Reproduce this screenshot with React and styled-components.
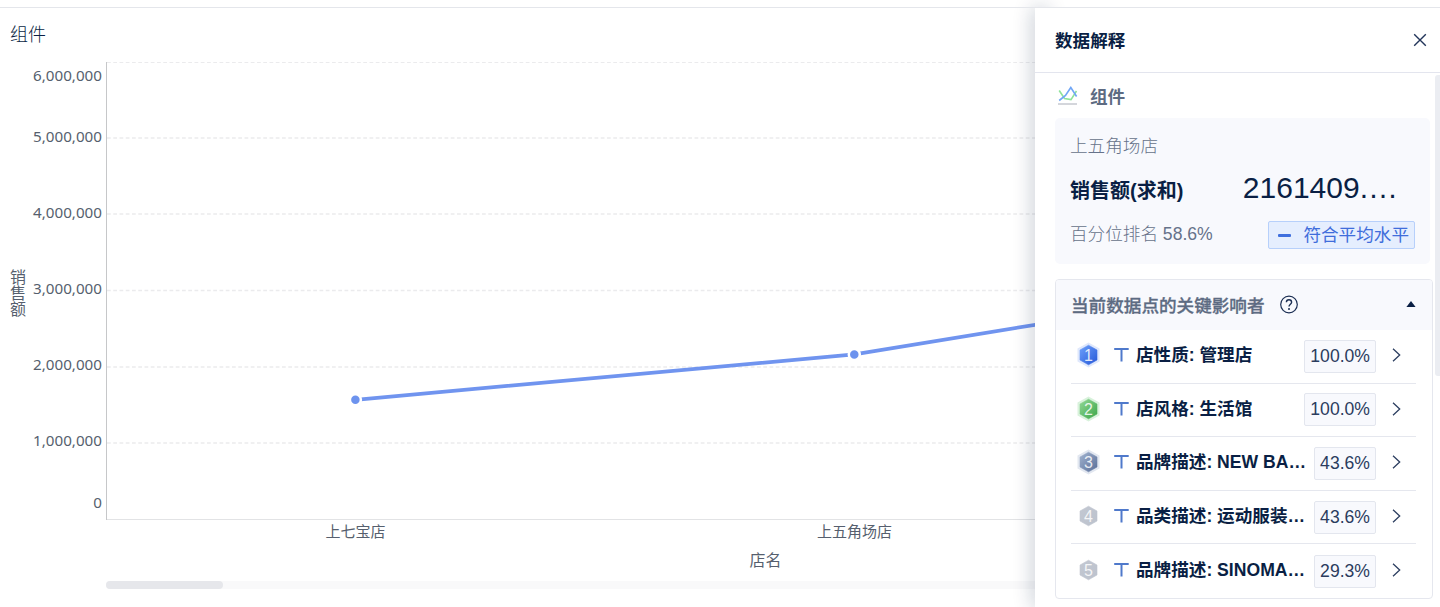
import React from "react";
import styled, { createGlobalStyle } from "styled-components";

const GlobalStyle = createGlobalStyle`
  * { box-sizing: border-box; }
  body {
    margin: 0;
    background: #fff;
    color: #0a1f44;
    font-family: "Liberation Sans", "Noto Sans CJK SC", sans-serif;
    font-size: 17.6px;
    overflow: hidden;
  }
`;

const Page = styled.div`
  display: flex;
  flex-direction: column;
  height: 607px;
  overflow: hidden;
`;

const TopLine = styled.div`
  flex: none;
  height: 8px;
  border-bottom: 1px solid #e4e6eb;
`;

const Main = styled.main`
  flex: 1;
  display: flex;
  min-height: 0;
`;

const ChartArea = styled.section`
  position: relative;
  z-index: -2;
  width: 1035px;
  flex: none;
  display: flex;
  flex-direction: column;
  overflow: hidden;
`;

const ChartTitle = styled.h2`
  margin: 0;
  padding: 14px 0 0 10px;
  height: 48px;
  font-size: 18px;
  line-height: 26px;
  font-weight: 300;
`;

const ChartSvg = styled.svg`
  display: block;
  flex: none;
`;

const AxisText = styled.text`
  fill: #565f6e;
  font-family: "Noto Sans", "Noto Sans CJK SC", sans-serif;
  font-size: ${(p) => p.$size || 15}px;
`;

const VerticalAxisText = styled(AxisText)`
  writing-mode: vertical-rl;
`;

const ScrollTrack = styled.div`
  margin: 5px 0 0 106px;
  height: 8px;
  background: #f9f9fa;
  border-radius: 4px 0 0 4px;
`;

const ScrollThumb = styled.div`
  width: 117px;
  height: 8px;
  border-radius: 4px;
  background: #e6e7eb;
`;

const Panel = styled.aside`
  position: relative;
  flex: 1;
  display: flex;
  flex-direction: column;
  background: #fff;

  &::before {
    content: "";
    position: absolute;
    z-index: -1;
    inset: 0 auto 0 0;
    width: 10px;
    box-shadow: 0 0 20px 1px rgba(9, 30, 66, 0.29);
  }
`;

const PanelHeader = styled.header`
  flex: none;
  height: 65px;
  padding: 0 13px 0 20px;
  display: flex;
  align-items: center;
  justify-content: space-between;
  border-bottom: 1px solid #e3e5ee;
`;

const PanelTitle = styled.h1`
  margin: 0;
  padding-top: 2px;
  font-size: 17.6px;
  line-height: 26px;
  font-weight: 700;
`;

const PanelBody = styled.div`
  flex: 1;
  display: flex;
  justify-content: space-between;
  min-height: 0;
`;

const PanelContent = styled.div`
  width: 398px;
  padding-left: 20px;
`;

const PanelScrollbar = styled.div`
  width: 5px;
  height: 301px;
  margin-top: 2px;
  border-radius: 3px 0 0 3px;
  background: #ebedf2;
`;

const Source = styled.div`
  display: flex;
  align-items: center;
  height: 45px;
  padding: 0 0 0 3px;
  gap: 12px;
  font-weight: 700;
  color: #5d6b82;
`;

const Summary = styled.div`
  width: 375px;
  height: 146px;
  padding: 13px 15px 0;
  background: #f8f9fd;
  border-radius: 5px;
`;

const SummaryRow = styled.div`
  display: flex;
  align-items: center;
  justify-content: space-between;
  height: ${(p) => p.$height}px;
`;

const Muted = styled.span`
  color: #66728a;
  font-weight: 300;
  padding-bottom: ${(p) => p.$lift || 0}px;
`;

const Metric = styled.strong`
  padding-top: 4px;
  font-size: 20px;
  line-height: 30px;
`;

const MetricValue = styled.span`
  font-size: 30px;
  line-height: 34px;
  padding: 0 17px 2px 0;
`;

const LevelTag = styled.span`
  display: flex;
  align-items: center;
  gap: 12px;
  height: 28px;
  width: 147px;
  padding: 0 5px 0 9px;
  border: 1px solid #b7d0fb;
  border-radius: 2px;
  background: #e5eefe;
  color: #3f6ddb;
  line-height: 26px;
  white-space: nowrap;
`;

const LevelDash = styled.i`
  width: 14px;
  height: 3px;
  border-radius: 1px;
  background: #3f6fde;
`;

const Card = styled.section`
  width: 378px;
  height: 320px;
  margin-top: 15px;
  border: 1px solid #e5e7ee;
  border-radius: 4px;
  overflow: hidden;
`;

const CardHeader = styled.div`
  display: flex;
  align-items: center;
  height: 50px;
  padding: 0 16px 2px 15px;
  background: #f8f9fd;
  color: #5d6b82;
  font-weight: 500;
  -webkit-text-stroke: 0.3px #5d6b82;
`;

const HelpSlot = styled.span`
  display: flex;
  margin-left: 15px;
  flex: 1;
`;

const RowList = styled.div`
  padding: 0 16px 0 15px;
`;

const Row = styled.div`
  display: flex;
  align-items: center;
  height: 53.6px;
  padding: 0 15px 2px 6px;
  border-bottom: 1px solid #e5e7ee;
  &:last-child { border-bottom: 0; }
`;

const RowName = styled.span`
  flex: 1;
  margin-left: 7px;
  font-weight: 700;
  line-height: 26px;
  white-space: nowrap;
`;

const Percent = styled.span`
  height: 33px;
  padding: 0 5px;
  margin: 2px 16px 0 0;
  border: 1px solid #e3e6ee;
  border-radius: 2px;
  background: #f8f9fd;
  color: #2b3c5e;
  line-height: 31px;
`;

const TypeSvg = styled.svg`
  margin-left: 14px;
`;

const RANK_STYLES = [
  { from: "#6ea1fb", to: "#2457d8", halo: "#dfe8fc" },
  { from: "#92d896", to: "#3ba648", halo: "#d9f2dc" },
  { from: "#a2b3cf", to: "#586e98", halo: "#e2e7f0" },
  { from: "#c3c8d2", to: "#bcc2cd" },
  { from: "#c3c8d2", to: "#bcc2cd" },
];

const ROWS = [
  { name: "店性质: 管理店", percent: "100.0%" },
  { name: "店风格: 生活馆", percent: "100.0%" },
  { name: "品牌描述: NEW BA…", percent: "43.6%" },
  { name: "品类描述: 运动服装…", percent: "43.6%" },
  { name: "品牌描述: SINOMA…", percent: "29.3%" },
];

const Y_LABELS = [
  ["6,000,000", 25],
  ["5,000,000", 86],
  ["4,000,000", 162],
  ["3,000,000", 238],
  ["2,000,000", 314.4],
  ["1,000,000", 390.4],
  ["0", 452.4],
];

const GRID_LINES = [6.5, 82, 158, 234.5, 311, 387];

function Chart() {
  return (
    <ChartSvg width="1035" height="520" viewBox="0 0 1035 520">
      {GRID_LINES.map((y, i) => (
        <line key={y} x1="107" x2="1035" y1={y} y2={y} stroke="#ebebed" strokeWidth={i ? 1.5 : 1} strokeDasharray="3.75 2.5" />
      ))}
      <line x1="106" x2="1035" y1="463.5" y2="463.5" stroke="#e2e3e5" />
      <line x1="106.5" x2="106.5" y1="6" y2="464" stroke="#c6c7c9" />
      {Y_LABELS.map(([label, y]) => (
        <AxisText key={label} $size={15.2} x="102" y={y} textAnchor="end">{label}</AxisText>
      ))}
      <VerticalAxisText $size={16} x="17" y="213">销售额</VerticalAxisText>
      <AxisText x="355.5" y="481" textAnchor="middle">上七宝店</AxisText>
      <AxisText x="854.5" y="481" textAnchor="middle">上五角场店</AxisText>
      <AxisText $size={16} x="765.5" y="510.4" textAnchor="middle">店名</AxisText>
      <polyline points="355.4,343.8 854.3,298.4 1040,268" fill="none" stroke="#7094ef" strokeWidth="3.75" />
      {[[355.4, 343.8], [854.3, 298.6]].map(([x, y]) => (
        <circle key={x} cx={x} cy={y} r="5.5" fill="#6d93ee" stroke="#fff" strokeWidth="2.5" />
      ))}
    </ChartSvg>
  );
}

function RankBadge({ rank }) {
  const s = RANK_STYLES[rank - 1];
  const id = `rank${rank}`;
  return (
    <svg width="23" height="26" viewBox="0 0 23 26">
      <defs>
        <linearGradient id={id} x1="0" y1="0" x2="1" y2="1">
          <stop offset="0" stopColor={s.from} />
          <stop offset="1" stopColor={s.to} />
        </linearGradient>
      </defs>
      {s.halo && <path d="M11.5 .5 22.5 6.5v13l-11 6-11-6v-13z" fill={s.halo} />}
      <path d="M11.5 3.2 20 8v10l-8.500 4.800L3 18V8z" fill={`url(#${id})`} stroke={`url(#${id})`} strokeWidth=".6" strokeLinejoin="round" />
      <text x="11.500" y="18.700" textAnchor="middle" fontSize="16" fill="#fff" fillOpacity=".85">{rank}</text>
    </svg>
  );
}

function TypeIcon() {
  return (
    <TypeSvg width="15" height="16" viewBox="0 0 15 16">
      <path d="M.2 2h14.500M7.500 2v12.600" stroke="#4f79cb" strokeWidth="2" fill="none" />
    </TypeSvg>
  );
}

function Chevron() {
  return (
    <svg width="9" height="14" viewBox="0 0 9 14">
      <path d="M1 .7 7.700 7 1 13.300" fill="none" stroke="#2d3f61" strokeWidth="1.3" />
    </svg>
  );
}

function LineChartIcon() {
  return (
    <svg width="20" height="20" viewBox="0 0 20 20" fill="none">
      <path d="M1.200 4.500 6.500 12.500 13 13.600 18.500 5" stroke="#8fe39a" strokeWidth="1.600" />
      <path d="M1.200 14.500 7.500 9.500 12.800 1.500 18.600 10.500" stroke="#70a6f6" strokeWidth="1.600" />
      <path d="M0 18h19" stroke="#a9adb8" />
    </svg>
  );
}

function CloseIcon() {
  return (
    <svg width="14" height="14" viewBox="0 0 14 14">
      <path d="M1.200 1.200 12.800 12.800M12.800 1.200 1.200 12.800" stroke="#22355a" strokeWidth="1.400" />
    </svg>
  );
}

function HelpIcon() {
  return (
    <svg width="19" height="19" viewBox="0 0 19 19" fill="none">
      <circle cx="9" cy="9.500" r="8.300" stroke="#1c2f54" strokeWidth="1.200" />
      <path d="M6.400 7.300c0-1.500 1.100-2.500 2.600-2.500s2.600 1 2.600 2.400c0 1.900-2.600 2.100-2.600 4.300" stroke="#1c2f54" strokeWidth="1.400" />
      <circle cx="9" cy="13.900" r="1" fill="#1c2f54" />
    </svg>
  );
}

export default function App() {
  return (
    <Page>
      <GlobalStyle />
      <TopLine />
      <Main>
        <ChartArea>
          <ChartTitle>组件</ChartTitle>
          <Chart />
          <ScrollTrack><ScrollThumb /></ScrollTrack>
        </ChartArea>
        <Panel>
          <PanelHeader>
            <PanelTitle>数据解释</PanelTitle>
            <CloseIcon />
          </PanelHeader>
          <PanelBody>
            <PanelContent>
              <Source>
                <LineChartIcon />
                <span>组件</span>
              </Source>
              <Summary>
                <SummaryRow $height={26}><Muted>上五角场店</Muted></SummaryRow>
                <SummaryRow $height={64}>
                  <Metric>销售额(求和)</Metric>
                  <MetricValue>2161409.…</MetricValue>
                </SummaryRow>
                <SummaryRow $height={28}>
                  <Muted $lift={5}>百分位排名 58.6%</Muted>
                  <LevelTag><LevelDash />符合平均水平</LevelTag>
                </SummaryRow>
              </Summary>
              <Card>
                <CardHeader>
                  <span>当前数据点的关键影响者</span>
                  <HelpSlot><HelpIcon /></HelpSlot>
                  <svg width="10" height="6" viewBox="0 0 10 6"><path d="M5 0 9.600 6H.4z" fill="#0a1f44" /></svg>
                </CardHeader>
                <RowList>
                  {ROWS.map((row, i) => (
                    <Row key={row.name}>
                      <RankBadge rank={i + 1} />
                      <TypeIcon />
                      <RowName>{row.name}</RowName>
                      <Percent>{row.percent}</Percent>
                      <Chevron />
                    </Row>
                  ))}
                </RowList>
              </Card>
            </PanelContent>
            <PanelScrollbar />
          </PanelBody>
        </Panel>
      </Main>
    </Page>
  );
}
